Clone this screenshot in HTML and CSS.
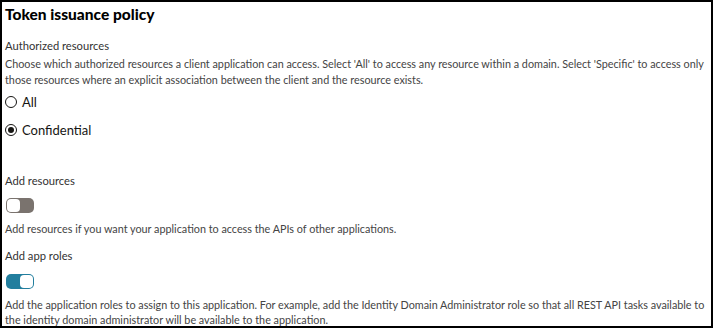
FILE: index.html
```html
<!DOCTYPE html>
<html lang="en">
<head>
    <meta charset="UTF-8" />
    <title>Token issuance policy</title>
    <link rel="stylesheet" href="styles.css">
</head>
<body>
    <div class="panel">
        <h2 class="panel-title">Token issuance policy</h2>

        <div class="field">
            <div class="label">Authorized resources</div>
            <p class="help">Choose which authorized resources a client application can access. Select 'All' to access any resource within a domain. Select 'Specific' to access only those resources where an explicit association between the client and the resource exists.</p>
            <div class="radios">
                <label class="radio"><span class="dot"></span>All</label>
                <label class="radio checked"><span class="dot"></span>Confidential</label>
            </div>
        </div>

        <div class="field resources">
            <div class="label">Add resources</div>
            <div class="toggle"><span class="knob"></span></div>
            <p class="help">Add resources if you want your application to access the APIs of other applications.</p>
        </div>

        <div class="field roles">
            <div class="label">Add app roles</div>
            <div class="toggle on"><span class="knob"></span></div>
            <p class="help last">Add the application roles to assign to this application. For example, add the Identity Domain Administrator role so that all REST API tasks available to the identity domain administrator will be available to the application.</p>
        </div>
    </div>
</body>
</html>
```

FILE: styles.css
```css
body {
    margin: 0;
    padding: 0;
    background: #fff;
    font-family: 'Lato', sans-serif;
    color: #161513;
}

.panel {
    box-sizing: border-box;
    width: 713px;
    height: 328px;
    border: 2px solid #000;
    padding: 2px 4px 0 3px;
    overflow: hidden;
}

.panel-title {
    margin: 0;
    font-size: 15.5px;
    line-height: 20px;
    font-weight: 900;
    color: #000;
}

.field {
    margin-top: 13px;
}

.label {
    font-size: 11.2px;
    line-height: 18px;
    color: #333;
}

.help {
    margin: 1px 0 0;
    font-size: 10.8px;
    line-height: 16px;
    color: #444;
}

.help.last {
    line-height: 15px;
}

.radios {
    display: flex;
    flex-direction: column;
    gap: 8px;
    margin-top: 4px;
}

.radio {
    display: flex;
    align-items: center;
    gap: 5px;
    height: 20px;
    font-size: 13px;
    color: #161513;
}

.dot {
    box-sizing: border-box;
    width: 12px;
    height: 12px;
    border: 1.5px solid #161513;
    border-radius: 50%;
    display: flex;
    align-items: center;
    justify-content: center;
}

.radio.checked .dot::after {
    content: "";
    width: 6px;
    height: 6px;
    border-radius: 50%;
    background: #161513;
}

.resources {
    margin-top: 32px;
}

.roles {
    margin-top: 10px;
}

.toggle {
    box-sizing: border-box;
    width: 28px;
    height: 15px;
    margin: 8px 0 8px 1px;
    border-radius: 5px;
    background: #7a736e;
    padding: 1px;
    display: flex;
}

.knob {
    box-sizing: border-box;
    width: 13px;
    height: 13px;
    border-radius: 4px;
    background: #fff;
}

.toggle.on {
    background: #227e9e;
    justify-content: flex-end;
}

.roles .toggle {
    margin-top: 9px;
}
```
